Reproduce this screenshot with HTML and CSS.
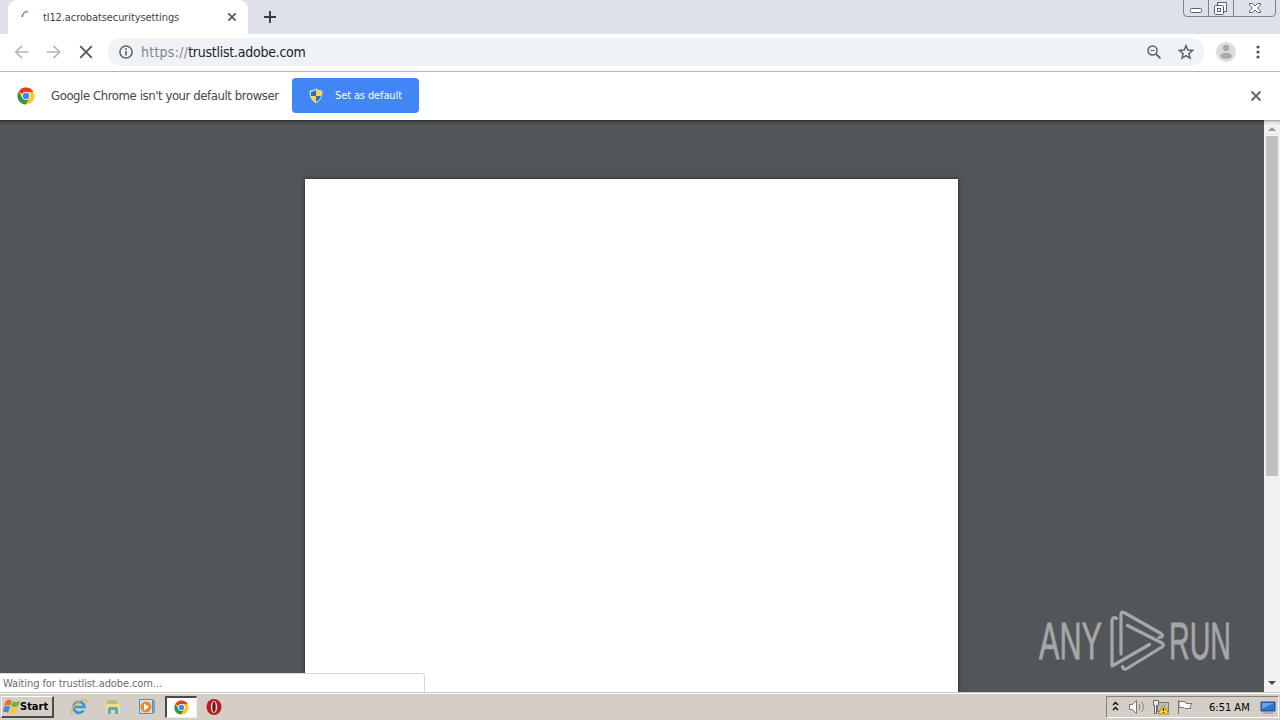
FILE: index.html
```
<!DOCTYPE html>
<html lang="en">
<head>
  <meta charset="UTF-8">
  <meta name="viewport" content="width=device-width, initial-scale=1.0">
  <title>tl12.acrobatsecuritysettings</title>
  <link rel="stylesheet" href="styles.css">
</head>
<body>
  <svg width="0" height="0" class="defs">
    <symbol id="chrome" viewBox="0 0 18 18">
      <circle cx="9" cy="9" r="8.5" fill="#fbc827"/>
      <path d="M9 9 1.6 4.8A8.5 8.5 0 0 1 16.4 4.8L9 5z" fill="#df3b2f"/>
      <path d="M1.6 4.8A8.5 8.5 0 0 0 8.5 17.5L12.4 11 9 9 5.4 11z" fill="#249b4c"/>
      <circle cx="9" cy="9" r="4.1" fill="#fff"/>
      <circle cx="9" cy="9" r="3.2" fill="#4482ed"/>
    </symbol>
  </svg>

  <header class="tabstrip">
    <div class="prev-tab"></div>
    <div class="tab">
      <svg class="spinner" width="16" height="16"><path d="M2.2 8A6 6 0 0 1 8 2.3" fill="none" stroke="#8b8d90" stroke-width="1.8"/></svg>
      <span class="tab-title">tl12.acrobatsecuritysettings</span>
      <svg class="tab-close" width="10" height="10"><path d="M1.3 1.3l7.4 7.4M8.7 1.3L1.3 8.7" stroke="#55585c" stroke-width="1.7"/></svg>
    </div>
    <svg class="new-tab" width="14" height="14"><path d="M7 1v12M1 7h12" stroke="#35383c" stroke-width="1.9"/></svg>
    <div class="window-buttons">
      <svg width="97" height="17" fill="none" stroke="#596070">
        <path d="M.5 0v13q0 3.5 3.5 3.5h85q3.5 0 3.5-3.5V0M25.500 0v16M50.500 0v16" stroke="#7c828e"/>
        <rect x="7.500" y="8.500" width="11" height="4" rx="1" fill="#fff"/>
        <path d="M34.500 5.500V2.500h9v9h-3" fill="#fff"/>
        <rect x="31.500" y="5.500" width="9" height="9" rx="1" fill="#fff"/>
        <rect x="34.500" y="8.500" width="3" height="3"/>
        <path d="M66.500 3.500h3l2.500 2.500 2.500-2.500h3v1.500l-3 3 3 3v1.500h-3L72 10l-2.500 2.500h-3V11l3-3-3-3z" fill="#fff"/>
      </svg>
    </div>
  </header>

  <nav class="toolbar">
    <svg class="nav-icons" width="86" height="16" fill="none">
      <path d="M14.500 8H2M8 1.800L1.800 8 8 14.200M33 8h12.500M39.500 1.800L45.700 8l-6.200 6.200" stroke="#b5b7ba" stroke-width="1.700"/>
      <path d="M66.200 2.200l11.600 11.600M77.800 2.200L66.200 13.800" stroke="#55585c" stroke-width="1.900"/>
    </svg>
    <div class="omnibox">
      <svg width="14" height="14"><circle cx="7" cy="7" r="6.100" fill="none" stroke="#5f6368" stroke-width="1.500"/><path d="M7 6v4.500M7 3.300v1.600" stroke="#5f6368" stroke-width="1.600"/></svg>
      <span class="url"><span class="scheme">https://</span>trustlist.adobe.com</span>
      <svg class="zoom-icon" width="14" height="14" fill="none" stroke="#5f6368"><circle cx="5.500" cy="5.500" r="4.500" stroke-width="1.500"/><path d="M9 9l4.500 4.500" stroke-width="1.800"/><path d="M3.300 5.500h4.400"/></svg>
      <svg class="star" width="16" height="16"><path d="M8 1.700l1.800 4.400 4.700.4-3.600 3.100 1.100 4.600L8 11.700l-4 2.500 1.100-4.600-3.600-3.100 4.700-.4z" fill="none" stroke="#5f6368" stroke-width="1.500"/></svg>
    </div>
    <svg class="avatar" width="20" height="20"><circle cx="10" cy="10" r="10" fill="#dcdcdc"/><circle cx="10" cy="6" r="3.200" fill="#a9a9a9"/><ellipse cx="10" cy="13.800" rx="6" ry="3" fill="#a9a9a9"/></svg>
    <svg class="menu" width="4" height="14" fill="#505357"><circle cx="2" cy="2" r="1.600"/><circle cx="2" cy="7" r="1.600"/><circle cx="2" cy="12" r="1.600"/></svg>
  </nav>

  <section class="infobar">
    <svg class="chrome-logo" width="18" height="18"><use href="#chrome"/></svg>
    <span class="info-text">Google Chrome isn't your default browser</span>
    <button class="default-button">
      <svg width="14" height="16">
        <path d="M7 1Q4 3 1 3q-.5 8 6 12 6.500-4 6-12-3 0-6-2z" fill="#f8d748" stroke="#d9d9cd"/>
        <path d="M7 2Q4.500 3.700 2 4v4h5zM7 8h5q-.8 3.700-5 6z" fill="#276fc5"/>
      </svg>
      <span>Set as default</span>
    </button>
    <svg class="info-close" width="12" height="12"><path d="M1.500 1.500l9 9M10.500 1.500l-9 9" stroke="#65686c" stroke-width="2"/></svg>
  </section>

  <main class="viewer">
    <div class="canvas">
      <div class="page"></div>
      <div class="status">Waiting for trustlist.adobe.com...</div>
      <svg class="watermark" width="206" height="70">
        <g class="brand">
          <text x="2" y="50" textLength="63" lengthAdjust="spacingAndGlyphs">ANY</text>
          <text x="132" y="50" textLength="62" lengthAdjust="spacingAndGlyphs">RUN</text>
        </g>
        <g fill="none" stroke="#a5a8aa" stroke-width="3.2" stroke-linejoin="round" stroke-linecap="round">
          <path d="M79.500 9.500Q75 7 75 12v45l37.500-21.500"/>
          <path d="M84 45V5q0-3 3-1.500l37 21q3 2 0 3.500l-2 .5"/>
          <path d="M90.500 16.500L125 34q3 2 0 4L90 59.500q-4 2-4.500-2"/>
        </g>
      </svg>
    </div>
    <div class="scrollbar">
      <svg width="16" height="16"><path d="M4 11l4-4 4 4z" fill="#999"/></svg>
      <div class="thumb"></div>
      <svg class="scroll-down" width="16" height="16"><path d="M4 5l4 4 4-4z" fill="#4b4b4b"/></svg>
    </div>
  </main>

  <footer class="taskbar">
    <button class="start">
      <svg width="17" height="17">
        <path d="M3 3q3-3 6 0L7 8Q4 6 1 8z" fill="#eb702b"/>
        <path d="M10 3q3 2 7 0l-2 5q-3 2-7 0z" fill="#70b43c"/>
        <path d="M1 9q3-2 6 0l-2 6q-2-2-5-1z" fill="#4788d2"/>
        <path d="M8 9q3 2 7 0l-2 6q-3 1-7 0z" fill="#f4c73c"/>
      </svg>
      <span>Start</span>
    </button>
    <div class="quick">
      <svg width="18" height="18" fill="none">
        <path d="M13.500 12.500A5.500 5.500 0 1 1 14.500 9H5" stroke="#319bd8" stroke-width="2.700"/>
        <path d="M2 16Q-1 14 6 6q7-6 10-4 1 1 0 3" stroke="#e7b53a" stroke-width="1.500"/>
      </svg>
      <svg width="18" height="18">
        <path d="M2 3h5l1 2h7v10H2z" fill="#e5bd51"/><path d="M4 2h9v6H4z" fill="#a6c782"/>
        <path d="M2 6h14v9H2z" fill="#f3dc86"/><path d="M4 16v-5q0-2 2-2h6q2 0 2 2v5h-3v-4H7v4z" fill="#58a8cf"/>
      </svg>
      <svg width="18" height="18">
        <path d="M1.500 1.500h13v14h-13z" fill="#c8e4fa" stroke="#4a91cc"/><path d="M15 2h2v13h-2z" fill="#70a7d4"/>
        <circle cx="8" cy="9" r="5.500" fill="#f18b21"/><path d="M6 5.500v7L11 9z" fill="#fff"/>
      </svg>
      <div class="active-task"><svg width="15" height="15"><use href="#chrome"/></svg></div>
      <svg width="18" height="18"><ellipse cx="9" cy="9" rx="7.500" ry="8" fill="#b51c22"/><ellipse cx="9" cy="9" rx="3.2" ry="6" fill="#f6e8e5"/><ellipse cx="9" cy="9" rx="1.700" ry="5.200" fill="#831014"/></svg>
    </div>
    <div class="tray">
      <svg width="90" height="18">
        <path d="M6 7l2.500-2.500L11 7M6 12l2.500-2.500L11 12" fill="none" stroke="#111" stroke-width="1.500"/>
        <path d="M22.500 6.500h3l4-4v13l-4-4h-3z" fill="#fff" stroke="#777"/>
        <path d="M32 6q2 3 0 6M34.500 4q4 5 0 10" fill="none" stroke="#858585"/>
        <path d="M50.500 4.500h11v9h-11z" fill="#bbb" stroke="#777"/>
        <path d="M46.500 2.500h5v5h-2v8h-2v-8h-1z" fill="#eee" stroke="#666"/>
        <path d="M56.500 7L62 16H51z" fill="#ffd829" stroke="#ad8e18"/><path d="M56.500 10v3M56.500 14v1" stroke="#222" stroke-width="1.300"/>
        <path d="M71.500 2v14M72 3.500h6l1 2h6l-2 3 1 2h-6l-1-1h-5z" fill="#fff" stroke="#777"/>
      </svg>
      <time>6:51 AM</time>
      <svg class="desktop" width="17" height="16"><path d="M1 3h14v9H1z" fill="#2875ce" stroke="#235186"/><path d="M2 4h12L2 10z" fill="#65a3e8"/><path d="M3 14h10" stroke="#888" stroke-width="1"/></svg>
    </div>
  </footer>
</body>
</html>
```
FILE: styles.css
```
* {
  box-sizing: border-box;
}

body {
  display: flex;
  flex-direction: column;
  width: 1280px;
  height: 720px;
  margin: 0;
  overflow: hidden;
  font-family: "DejaVu Sans Condensed", "DejaVu Sans", sans-serif;
  font-size: 11px;
}

svg {
  display: block;
  flex: none;
}

.defs {
  position: absolute;
}

button {
  font: inherit;
  border: 0;
}

.tabstrip {
  display: flex;
  height: 34px;
  background: #dee1e8;
}

.prev-tab {
  width: 8px;
}

.tab {
  display: flex;
  align-items: center;
  width: 240px;
  padding: 0 11px 0 12px;
  background: #fff;
  border-radius: 9px 9px 0 0;
}

.tab-title {
  margin-left: 7px;
  color: #414346;
  white-space: nowrap;
  letter-spacing: -.1px;
}

.tab-close {
  margin-left: auto;
}

.new-tab {
  margin: 10px 0 0 15px;
}

.window-buttons {
  margin: 0 0 0 auto;
}

.toolbar {
  display: flex;
  align-items: center;
  height: 38px;
  padding: 0 20px 1px 14px;
  background: #fff;
  border-bottom: 1px solid #b5b8b7;
}

.omnibox {
  display: flex;
  align-items: center;
  width: 1096px;
  height: 28px;
  margin-left: 8px;
  padding: 0 10px 0 11px;
  background: #f0f3f5;
  border-radius: 14px;
}

.url {
  margin-left: 8px;
  font-size: 14px;
  letter-spacing: -.25px;
  color: #202124;
}

.scheme {
  letter-spacing: .25px;
  color: #808488;
}

.zoom-icon {
  margin-left: auto;
}

.star {
  margin-left: 17px;
}

.avatar {
  margin-left: 12px;
}

.menu {
  margin-left: auto;
}

.infobar {
  display: flex;
  align-items: center;
  height: 48px;
  padding: 0 18px 1px 17px;
  background: #fff;
}

.info-text {
  width: 228px;
  margin-left: 16px;
  font-size: 13px;
  letter-spacing: -.42px;
  white-space: nowrap;
  color: #46484a;
}

.default-button {
  display: flex;
  align-items: center;
  gap: 12px;
  width: 127px;
  height: 35px;
  margin-left: 13px;
  padding: 0 0 0 17px;
  background: #4285f4;
  color: #fff;
  border-radius: 4px;
  letter-spacing: -.12px;
  white-space: nowrap;
}

.info-close {
  margin-left: auto;
}

.viewer {
  display: flex;
  height: 572px;
  overflow: hidden;
}

.canvas {
  position: relative;
  flex: 1;
  background: linear-gradient(#26282c, #45494c 2px, #525659 5px);
  padding: 59px 0 0 305px;
}

.page {
  width: 653px;
  height: 513px;
  background: #fff;
  box-shadow: 0 0 4px #222;
}

.status {
  position: absolute;
  left: 0;
  bottom: 0;
  width: 425px;
  height: 19px;
  padding: 3px;
  background: #fff;
  color: #6b6d70;
  border: solid #d7d7d7;
  border-width: 1px 1px 0 0;
  border-radius: 0 4px 0 0;
  letter-spacing: -.1px;
}

.watermark {
  position: absolute;
  left: 1037px;
  top: 489px;
}

.brand {
  font-family: "Liberation Sans Narrow", "Liberation Sans", sans-serif;
  font-size: 51px;
  fill: #a5a8aa;
  stroke: #a5a8aa;
  stroke-width: .8px;
}

.scrollbar {
  display: flex;
  flex-direction: column;
  width: 16px;
  background: linear-gradient(#999, #dcdcdc 2px, #f1f1f1 5px);
}

.thumb {
  width: 12px;
  height: 340px;
  margin-left: 2px;
  background: #c1c1c1;
}

.scroll-down {
  margin-top: auto;
}

.taskbar {
  display: flex;
  height: 28px;
  padding: 3px 0 1px 1px;
  background: #d4cec7;
  border-top: 1px solid #cbc8c1;
  box-shadow: inset 0 1px #fff;
}

.start {
  display: flex;
  align-items: center;
  gap: 0;
  width: 53px;
  height: 22px;
  padding: 0 1px;
  background: #d4cec7;
  border: solid;
  border-width: 1px 2px 2px 1px;
  border-color: #fff #4e4b49 #4e4b49 #fff;
  font-weight: bold;
}

.quick {
  display: flex;
  align-items: center;
  gap: 16px;
  height: 22px;
  margin-left: 16px;
}

.active-task {
  display: grid;
  place-items: center;
  width: 32px;
  height: 22px;
  margin: 0 -8px 0 -7px;
  background: #fff;
  border: solid;
  border-width: 2px 1px 1px 2px;
  border-color: #4b4947 #eee #eee #4b4947;
}

.tray {
  display: flex;
  align-items: center;
  width: 173px;
  height: 22px;
  margin: 0 1px 0 auto;
  border: 1px solid;
  border-color: #85807a #fff #fff #85807a;
}

.tray time {
  margin-left: 12px;
  white-space: nowrap;
}

.desktop {
  margin: 0 1px 0 auto;
}
```
